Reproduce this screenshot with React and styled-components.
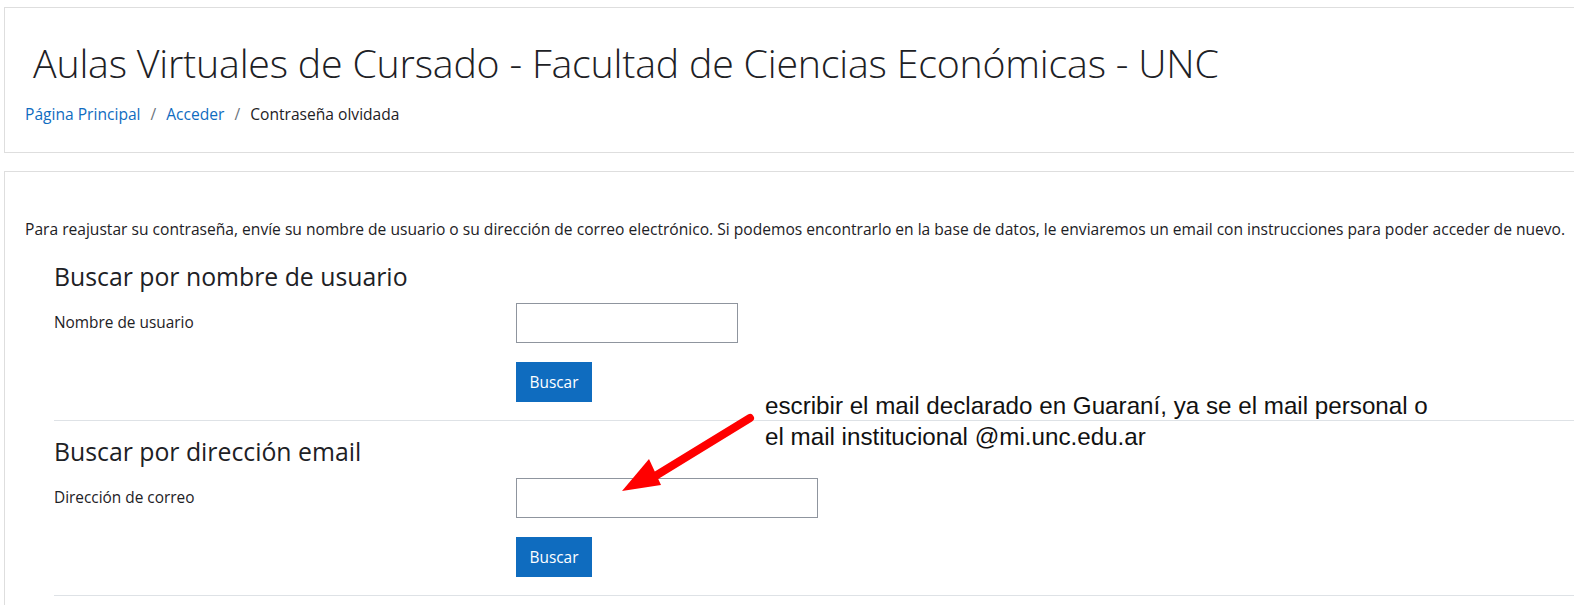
import React from 'react';
import styled, { createGlobalStyle } from 'styled-components';

const GlobalStyle = createGlobalStyle`
  html, body {
    margin: 0;
    padding: 0;
    background: #fff;
    overflow: hidden;
  }
  body {
    font-family: "Open Sans", "Noto Sans", sans-serif;
    color: #1d2125;
  }
`;

const Page = styled.div`
  position: relative;
  width: 1574px;
  height: 605px;
  padding: 7px 0 0 4px;
  box-sizing: border-box;
  display: flex;
  flex-direction: column;
  gap: 18px;
`;

const Card = styled.div`
  border: 1px solid #dedede;
  border-right: none;
  background: #fff;
`;

const HeaderCard = styled(Card)`
  height: 146px;
  flex-shrink: 0;
  box-sizing: border-box;
  padding: 30px 0 0 28px;
`;

const Title = styled.h1`
  margin: 0;
  font-weight: 300;
  font-size: 39.3px;
  line-height: 50px;
  letter-spacing: -0.2px;
  color: #1d2125;
`;

const Crumbs = styled.nav`
  margin-top: 15px;
  margin-left: -8px;
  font-size: 15.6px;
  display: flex;
  gap: 10px;
  color: #1d2125;
`;

const Crumb = styled.a`
  color: ${(p) => (p.$current ? '#1d2125' : '#0f6cbf')};
  text-decoration: none;
`;

const Sep = styled.span`
  color: #6a737b;
`;

const BodyCard = styled(Card)`
  flex: 1;
  border-bottom: none;
  padding: 46px 0 0 20px;
`;

const Intro = styled.p`
  margin: 0 0 20px 0;
  font-size: 15.6px;
  line-height: 22px;
  white-space: nowrap;
`;

const Section = styled.fieldset`
  border: none;
  margin: 0 0 0 29px;
  padding: 0 0 18px 0;
  border-bottom: 1px solid #dee2e6;
  & + & {
    padding-top: 14px;
  }
`;

const Legend = styled.h3`
  margin: 0 0 11px 0;
  font-weight: 400;
  font-size: 24.8px;
  line-height: 32px;
  color: #1d2125;
`;

const Row = styled.div`
  display: grid;
  grid-template-columns: 462px 1fr;
  align-items: center;
  margin-bottom: ${(p) => p.$gap || 0}px;
`;

const Label = styled.label`
  font-size: 15.4px;
  padding-bottom: 2px;
`;

const Input = styled.input`
  width: ${(p) => p.$w}px;
  height: 40px;
  box-sizing: border-box;
  border: 1px solid #8f959e;
  border-radius: 0;
  padding: 0 10px;
  font: inherit;
`;

const Button = styled.button`
  width: 76px;
  height: 40px;
  border: none;
  background: #0f6cbf;
  color: #fff;
  font-family: inherit;
  font-size: 15.4px;
  padding: 0;
  border-radius: 0;
`;

const Note = styled.div`
  position: absolute;
  left: 765px;
  top: 390px;
  font-family: "Liberation Sans", Arial, sans-serif;
  font-size: 24.2px;
  line-height: 31px;
  color: #111;
`;

const Arrow = styled.svg`
  position: absolute;
  left: 600px;
  top: 400px;
`;

export default function App() {
  return (
    <>
      <GlobalStyle />
      <Page>
        <HeaderCard>
          <Title>Aulas Virtuales de Cursado - Facultad de Ciencias Económicas - UNC</Title>
          <Crumbs>
            <Crumb href="#">Página Principal</Crumb>
            <Sep>/</Sep>
            <Crumb href="#">Acceder</Crumb>
            <Sep>/</Sep>
            <Crumb $current>Contraseña olvidada</Crumb>
          </Crumbs>
        </HeaderCard>
        <BodyCard>
          <Intro>
            Para reajustar su contraseña, envíe su nombre de usuario o su dirección de correo electrónico. Si podemos encontrarlo en la base de datos, le enviaremos un email con instrucciones para poder acceder de nuevo.
          </Intro>
          <Section>
            <Legend>Buscar por nombre de usuario</Legend>
            <Row $gap={19}>
              <Label>Nombre de usuario</Label>
              <Input $w={222} />
            </Row>
            <Row>
              <span />
              <div>
                <Button>Buscar</Button>
              </div>
            </Row>
          </Section>
          <Section>
            <Legend>Buscar por dirección email</Legend>
            <Row $gap={19}>
              <Label>Dirección de correo</Label>
              <Input $w={302} />
            </Row>
            <Row>
              <span />
              <div>
                <Button>Buscar</Button>
              </div>
            </Row>
          </Section>
        </BodyCard>
        <Note>
          escribir el mail declarado en Guaraní, ya se el mail personal o
          <br />
          el mail institucional @mi.unc.edu.ar
        </Note>
        <Arrow width="170" height="110" viewBox="0 0 170 110">
          <line x1="150" y1="18" x2="52" y2="78" stroke="#ff0000" strokeWidth="8" strokeLinecap="round" />
          <polygon points="22,91 49,59 61,85" fill="#ff0000" />
        </Arrow>
      </Page>
    </>
  );
}
